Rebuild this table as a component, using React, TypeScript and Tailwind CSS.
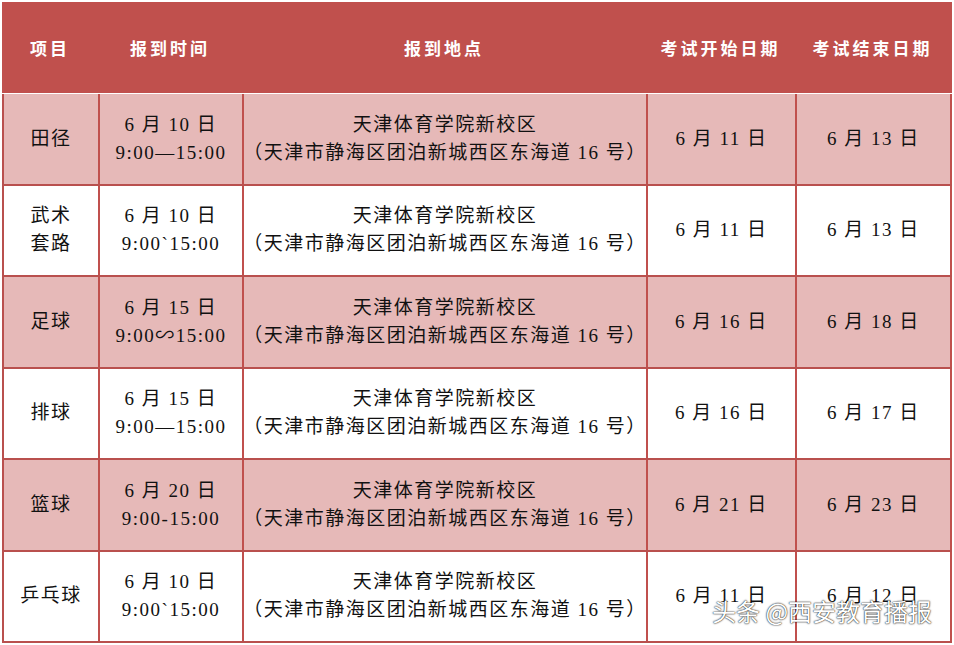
import React from 'react';

type Row = {
  item: string[];
  date: string;
  time: string;
  start: string;
  end: string;
  pink: boolean;
};

const rows: Row[] = [
  { item: ['田径'], date: '6 月 10 日', time: '9:00—15:00', start: '6 月 11 日', end: '6 月 13 日', pink: true },
  { item: ['武术', '套路'], date: '6 月 10 日', time: '9:00`15:00', start: '6 月 11 日', end: '6 月 13 日', pink: false },
  { item: ['足球'], date: '6 月 15 日', time: '9:00∽15:00', start: '6 月 16 日', end: '6 月 18 日', pink: true },
  { item: ['排球'], date: '6 月 15 日', time: '9:00—15:00', start: '6 月 16 日', end: '6 月 17 日', pink: false },
  { item: ['篮球'], date: '6 月 20 日', time: '9:00-15:00', start: '6 月 21 日', end: '6 月 23 日', pink: true },
  { item: ['乒乓球'], date: '6 月 10 日', time: '9:00`15:00', start: '6 月 11 日', end: '6 月 12 日', pink: false },
];

const headers = ['项目', '报到时间', '报到地点', '考试开始日期', '考试结束日期'];
const cols = 'grid grid-cols-[96px_144px_404px_149px_155px]';

const Cell: React.FC<{ children: React.ReactNode }> = ({ children }) => (
  <div className="flex flex-col items-center justify-center border-r-2 border-[#c0504d] text-center leading-[28px]">
    {children}
  </div>
);

export default function App() {
  return (
    <div className="relative h-[645px] w-[954px] overflow-hidden bg-white">
      <div className="ml-[2px] mt-[2px] w-[950px]">
        <div className={`${cols} h-[91px] bg-[#c0504d] font-['Noto_Sans_CJK_SC',sans-serif] text-[17px] font-bold tracking-[3px] text-white`}>
          {headers.map((h) => (
            <div key={h} className="flex items-center justify-center">
              {h}
            </div>
          ))}
        </div>
        <div className="h-[1px] bg-white" />
        {rows.map((r, i) => (
          <div
            key={i}
            className={`${cols} h-[91.5px] border-b-2 border-l-2 border-[#b9504e] font-['Liberation_Serif','Noto_Sans_CJK_SC',serif] text-[19px] tracking-[1.5px] text-[#111] ${
              r.pink ? 'bg-[#e6b9b8]' : 'bg-white'
            }`}
          >
            <Cell>
              {r.item.map((t) => (
                <span key={t}>{t}</span>
              ))}
            </Cell>
            <Cell>
              <span>{r.date}</span>
              <span>{r.time}</span>
            </Cell>
            <Cell>
              <span>天津体育学院新校区</span>
              <span className="whitespace-nowrap">（天津市静海区团泊新城西区东海道 16 号）</span>
            </Cell>
            <Cell>
              <span>{r.start}</span>
            </Cell>
            <Cell>
              <span>{r.end}</span>
            </Cell>
          </div>
        ))}
      </div>
      <div className="absolute left-[712px] top-[596px] font-['Noto_Sans_CJK_SC',sans-serif] text-[24px] leading-[30px] text-white [text-shadow:0_0_2px_rgba(0,0,0,0.8),0_0_1px_rgba(0,0,0,0.9)]">
        头条 @西安教育播报
      </div>
    </div>
  );
}
